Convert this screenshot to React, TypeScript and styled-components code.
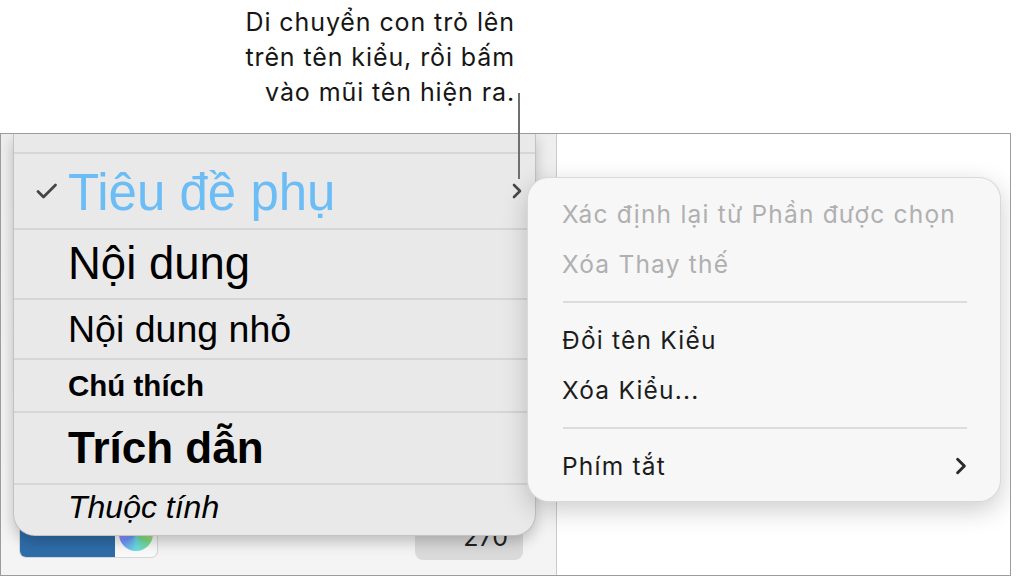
import React from "react";
import styled, { createGlobalStyle } from "styled-components";

const GlobalStyle = createGlobalStyle`
  html, body {
    margin: 0;
    padding: 0;
    background: #ffffff;
  }
  body {
    font-family: "Inter", "Noto Sans", sans-serif;
  }
`;

const Page = styled.div`
  position: relative;
  width: 1016px;
  height: 577px;
  overflow: hidden;
  background: #ffffff;
`;

const Callout = styled.div`
  height: 133px;
  width: 515px;
  box-sizing: border-box;
  padding-top: 5px;
  text-align: right;
  font-family: "Inter", "Noto Sans", sans-serif;
  font-size: 25px;
  letter-spacing: 0.9px;
  line-height: 35px;
  color: #161616;
`;

const LeaderLine = styled.div`
  position: absolute;
  left: 518px;
  top: 93px;
  width: 2px;
  height: 86px;
  background: #6f6f6f;
  z-index: 5;
`;

const Frame = styled.div`
  position: relative;
  display: flex;
  width: 1011px;
  height: 443px;
  box-sizing: border-box;
  border: 1px solid #9c9c9c;
  overflow: hidden;
`;

const Inspector = styled.div`
  width: 556px;
  flex-shrink: 0;
  box-sizing: border-box;
  border-right: 1px solid #cbcbcb;
  background: linear-gradient(#eeeeee, #f4f4f4);
  display: flex;
  flex-direction: column;
  justify-content: flex-end;
`;

const Canvas = styled.div`
  flex: 1;
  background: #ffffff;
`;

const Controls = styled.div`
  display: flex;
  justify-content: space-between;
  align-items: flex-end;
  padding: 0 33px 15px 19px;
`;

const ColorWell = styled.div`
  display: flex;
  height: 56px;
  margin-bottom: 3px;
  border-radius: 6px;
  overflow: hidden;
  box-shadow: 0 0 0 1px rgba(0, 0, 0, 0.12);
  background: #fafafa;
`;

const Swatch = styled.div`
  width: 95px;
  background: #2f6da9;
`;

const WheelButton = styled.div`
  width: 42px;
  display: flex;
  align-items: center;
  justify-content: center;
  padding-top: 10px;
`;

const Wheel = styled.div`
  width: 34px;
  height: 34px;
  border-radius: 50%;
  background: conic-gradient(#ff5a5a, #ffd24a, #5ad66a, #4ad6e0, #4a7bff, #c85aff, #ff5a5a);
  filter: blur(0.6px);
  opacity: 0.8;
`;

const NumberField = styled.div`
  width: 108px;
  height: 54px;
  box-sizing: border-box;
  border-radius: 8px;
  background: #dadada;
  display: flex;
  align-items: flex-end;
  justify-content: flex-end;
  padding: 0 15px 8px 0;
  font-family: "Inter", "Noto Sans", sans-serif;
  font-size: 25px;
  color: #222222;
`;

/* style list popup */

const StylePopup = styled.div`
  position: absolute;
  left: 12px;
  top: 0;
  width: 523px;
  box-sizing: border-box;
  background: #e9e9e9;
  border: 1px solid rgba(0, 0, 0, 0.16);
  border-top: none;
  border-radius: 0 0 22px 22px;
  box-shadow: 0 6px 14px rgba(0, 0, 0, 0.22);
  overflow: hidden;
  z-index: 2;
`;

const StyleRow = styled.div<{ $h: number; $first?: boolean }>`
  height: ${(p) => p.$h}px;
  display: flex;
  align-items: center;
  box-sizing: border-box;
  border-top: ${(p) => (p.$first ? "none" : "2px solid #d6d6d6")};
  padding-right: 13px;
  font-family: "Liberation Sans", "Arial", sans-serif;
  color: #000000;
  white-space: nowrap;
`;

const CheckSlot = styled.div`
  width: 54px;
  flex-shrink: 0;
  display: flex;
  justify-content: flex-end;
  padding-right: 10px;
  box-sizing: border-box;
`;

const StyleName = styled.span<{
  $size: number;
  $bold?: boolean;
  $italic?: boolean;
  $color?: string;
  $lift?: number;
}>`
  flex: 1;
  font-size: ${(p) => p.$size}px;
  font-weight: ${(p) => (p.$bold ? 700 : 400)};
  font-style: ${(p) => (p.$italic ? "italic" : "normal")};
  color: ${(p) => p.$color || "#000000"};
  position: relative;
  top: ${(p) => p.$lift || 0}px;
`;

/* submenu */

const Submenu = styled.div`
  position: absolute;
  left: 526px;
  top: 43px;
  width: 474px;
  box-sizing: border-box;
  padding: 11px 0 10px;
  background: #f7f7f7;
  border: 1px solid rgba(0, 0, 0, 0.12);
  border-radius: 22px;
  box-shadow: 0 8px 26px rgba(0, 0, 0, 0.2);
  z-index: 3;
  font-family: "Inter", "Noto Sans", sans-serif;
`;

const MenuItem = styled.div<{ $disabled?: boolean }>`
  height: 50px;
  display: flex;
  align-items: center;
  justify-content: space-between;
  padding: 0 33px 0 34px;
  font-size: 24.5px;
  letter-spacing: 1.2px;
  color: ${(p) => (p.$disabled ? "#b0b0b0" : "#1c1c1c")};
`;

const MenuSeparator = styled.div`
  height: 2px;
  margin: 12px 33px 12px 35px;
  background: #dcdcdc;
`;

const Chevron = ({ color = "#3a3a3a", w = 10, h = 16 }: { color?: string; w?: number; h?: number }) => (
  <svg width={w} height={h} viewBox="0 0 10 16" fill="none">
    <path d="M2 2 L8 8 L2 14" stroke={color} strokeWidth="2.6" strokeLinecap="round" strokeLinejoin="round" />
  </svg>
);

const CheckMark = () => (
  <svg width="22" height="16" viewBox="0 0 22 16" fill="none">
    <path d="M2 8.5 L7.5 14 L19.5 2" stroke="#454545" strokeWidth="2.8" strokeLinecap="round" strokeLinejoin="round" />
  </svg>
);

const App: React.FC = () => {
  return (
    <Page>
      <GlobalStyle />
      <Callout>
        Di chuyển con trỏ lên
        <br />
        trên tên kiểu, rồi bấm
        <br />
        vào mũi tên hiện ra.
      </Callout>
      <LeaderLine />
      <Frame>
        <Inspector>
          <Controls>
            <ColorWell>
              <Swatch />
              <WheelButton>
                <Wheel />
              </WheelButton>
            </ColorWell>
            <NumberField>270</NumberField>
          </Controls>
        </Inspector>
        <Canvas />

        <StylePopup>
          <StyleRow $h={18} $first />
          <StyleRow $h={76}>
            <CheckSlot>
              <CheckMark />
            </CheckSlot>
            <StyleName $size={51} $color="#6cbcf6" $lift={1}>
              Tiêu đề phụ
            </StyleName>
            <Chevron color="#474747" />
          </StyleRow>
          <StyleRow $h={70}>
            <CheckSlot />
            <StyleName $size={45.5}>Nội dung</StyleName>
          </StyleRow>
          <StyleRow $h={60}>
            <CheckSlot />
            <StyleName $size={37.5}>Nội dung nhỏ</StyleName>
          </StyleRow>
          <StyleRow $h={53}>
            <CheckSlot />
            <StyleName $size={29.5} $bold>
              Chú thích
            </StyleName>
          </StyleRow>
          <StyleRow $h={72}>
            <CheckSlot />
            <StyleName $size={44} $bold>
              Trích dẫn
            </StyleName>
          </StyleRow>
          <StyleRow $h={52}>
            <CheckSlot />
            <StyleName $size={32} $italic $lift={-3}>
              Thuộc tính
            </StyleName>
          </StyleRow>
        </StylePopup>

        <Submenu>
          <MenuItem $disabled>Xác định lại từ Phần được chọn</MenuItem>
          <MenuItem $disabled>Xóa Thay thế</MenuItem>
          <MenuSeparator />
          <MenuItem>Đổi tên Kiểu</MenuItem>
          <MenuItem>Xóa Kiểu...</MenuItem>
          <MenuSeparator />
          <MenuItem>
            Phím tắt
            <Chevron color="#2a2a2a" w={12} h={18} />
          </MenuItem>
        </Submenu>
      </Frame>
    </Page>
  );
};

export default App;
